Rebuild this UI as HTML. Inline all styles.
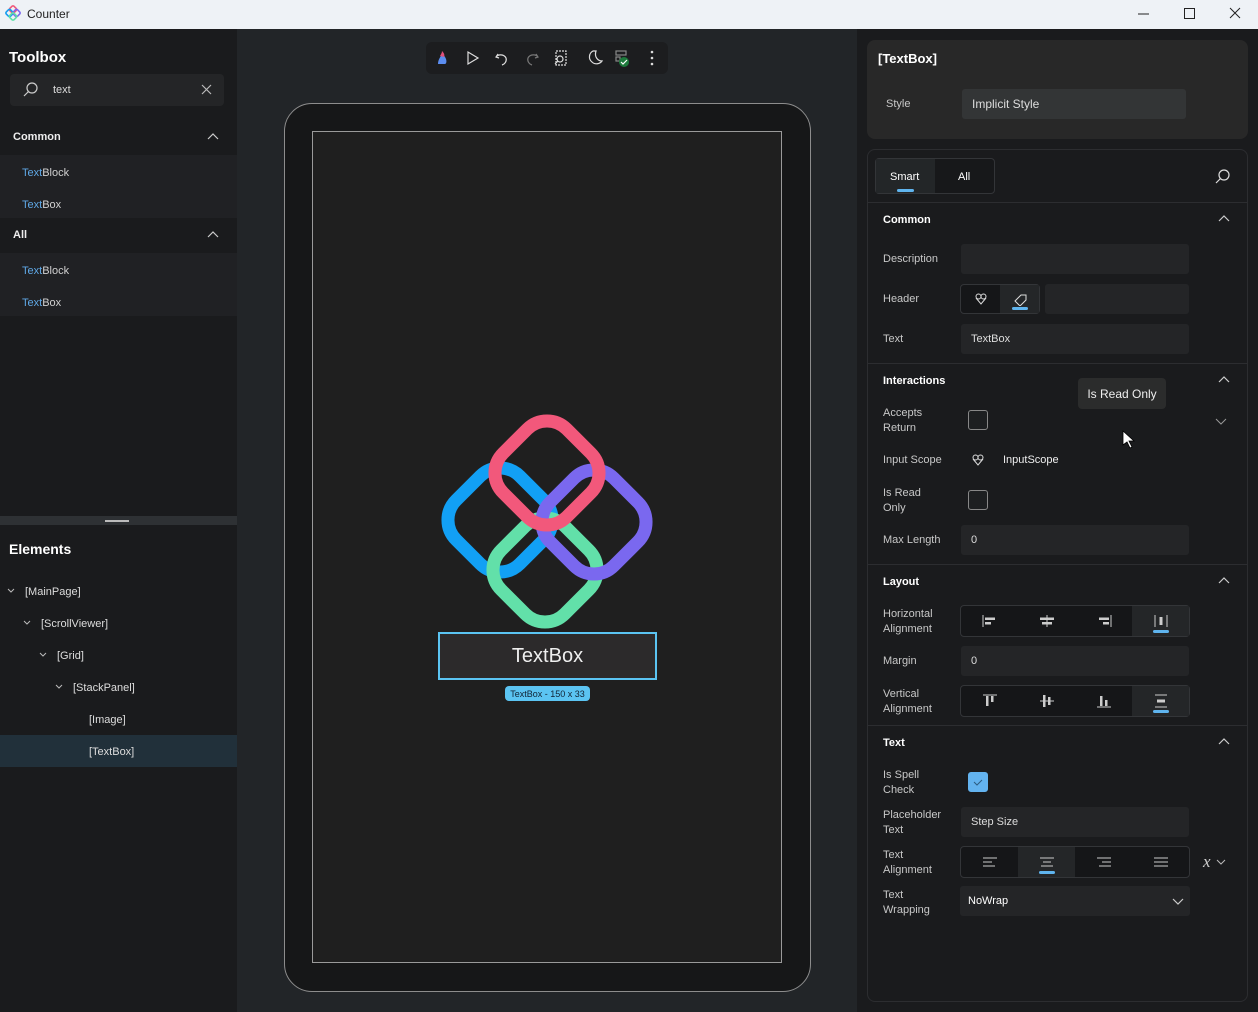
<!DOCTYPE html>
<html><head><meta charset="utf-8">
<style>
*{box-sizing:border-box;margin:0;padding:0}
body{width:1258px;height:1012px;overflow:hidden;background:#1a1b1d;font-family:"Liberation Sans",sans-serif;color:#e6e6e6;position:relative}
.a{position:absolute}
.t{font-size:11px;color:#d0d0d0}
.b{font-weight:bold;color:#fff}
.inp{position:absolute;background:#242527;border-radius:3px;font-size:11px;color:#ddd;padding-left:10px;display:flex;align-items:center}
.chev{position:absolute;width:12px;height:8px}
.seg{position:absolute;border:1px solid #333538;border-radius:4px;background:#151618;display:flex}
.seg div{flex:1;display:flex;align-items:center;justify-content:center;position:relative}
.seg .on{background:#242628}
.seg .on:after{content:"";position:absolute;bottom:3px;left:50%;margin-left:-8px;width:16px;height:3px;border-radius:2px;background:#5fb4ee}
.cb{position:absolute;width:20px;height:20px;border:1px solid #888;border-radius:3px;background:#1d1f21}
.lbl{position:absolute;font-size:11px;color:#c8c8c8;line-height:15px}
.hl{color:#5fa8e6}
</style></head><body>
<div class="a" style="left:0;top:0;width:1258px;height:29px;background:#eef2f6"></div>
<svg class="a" style="left:5px;top:5px" width="16" height="16" viewBox="0 0 16 16"><g fill="none" stroke-width="1.6"><rect x="5" y="1.5" width="6" height="6" rx="1.5" transform="rotate(45 8 4.5)" stroke="#f0587a"/><rect x="1.5" y="5" width="6" height="6" rx="1.5" transform="rotate(45 4.5 8)" stroke="#159cf0"/><rect x="8.5" y="5" width="6" height="6" rx="1.5" transform="rotate(45 11.5 8)" stroke="#7b68ee"/><rect x="5" y="8.5" width="6" height="6" rx="1.5" transform="rotate(45 8 11.5)" stroke="#5ee0a8"/></g></svg>
<div class="a" style="left:27px;top:7px;font-size:12px;color:#222">Counter</div>
<svg class="a" style="left:1130px;top:6px" width="120" height="16"><g stroke="#222" stroke-width="1" fill="none"><path d="M8 8h11"/><rect x="54.5" y="2.5" width="10" height="10"/><path d="M100 2l10 10M110 2l-10 10"/></g></svg>

<div class="a" style="left:0;top:29px;width:237px;height:983px;background:#1a1b1d"></div>
<div class="a b" style="left:9px;top:49px;font-size:15px">Toolbox</div>
<div class="a" style="left:10px;top:74px;width:214px;height:32px;background:#242527;border-radius:4px"></div>
<svg class="a" style="left:22px;top:81px" width="18" height="18"><circle cx="10" cy="7" r="5" stroke="#ccc" stroke-width="1.2" fill="none"/><path d="M6.5 10.5L2 15" stroke="#ccc" stroke-width="1.2"/></svg>
<div class="a t" style="left:53px;top:84px;color:#ddd">text</div>
<svg class="a" style="left:201px;top:84px" width="11" height="11"><path d="M1 1l9 9M10 1l-9 9" stroke="#bbb" stroke-width="1.2"/></svg>

<div class="a b" style="left:13px;top:131px;font-size:11px;color:#eee">Common</div>
<svg class="chev" style="left:207px;top:133px"><path d="M1 6l5-5 5 5" stroke="#ccc" stroke-width="1.2" fill="none"/></svg>
<div class="a" style="left:0;top:155px;width:237px;height:63px;background:#202124"></div>
<div class="a t" style="left:22px;top:167px"><span class="hl">Text</span>Block</div>
<div class="a t" style="left:22px;top:199px"><span class="hl">Text</span>Box</div>
<div class="a b" style="left:13px;top:229px;font-size:11px;color:#eee">All</div>
<svg class="chev" style="left:207px;top:231px"><path d="M1 6l5-5 5 5" stroke="#ccc" stroke-width="1.2" fill="none"/></svg>
<div class="a" style="left:0;top:253px;width:237px;height:63px;background:#202124"></div>
<div class="a t" style="left:22px;top:265px"><span class="hl">Text</span>Block</div>
<div class="a t" style="left:22px;top:297px"><span class="hl">Text</span>Box</div>

<div class="a" style="left:0;top:516px;width:237px;height:9px;background:#2e3134"></div>
<div class="a" style="left:105px;top:520px;width:24px;height:2px;background:#bbb"></div>
<div class="a b" style="left:9px;top:541px;font-size:14px">Elements</div>
<div class="a" style="left:0;top:735px;width:237px;height:32px;background:#21303a"></div>
<svg class="a" style="left:0;top:580px" width="237" height="190"><g stroke="#bbb" stroke-width="1" fill="none"><path d="M8 9l3 3 3-3"/><path d="M24 41l3 3 3-3"/><path d="M40 73l3 3 3-3"/><path d="M56 105l3 3 3-3"/></g></svg>
<div class="a t" style="left:25px;top:586px;color:#ddd">[MainPage]</div>
<div class="a t" style="left:41px;top:618px;color:#ddd">[ScrollViewer]</div>
<div class="a t" style="left:57px;top:650px;color:#ddd">[Grid]</div>
<div class="a t" style="left:73px;top:682px;color:#ddd">[StackPanel]</div>
<div class="a t" style="left:89px;top:714px;color:#ddd">[Image]</div>
<div class="a t" style="left:89px;top:746px;color:#ddd">[TextBox]</div>

<div class="a" style="left:237px;top:29px;width:620px;height:983px;background:#222528"></div>
<div class="a" style="left:426px;top:42px;width:242px;height:32px;background:#1c1d1f;border-radius:6px"></div>
<svg class="a" style="left:426px;top:42px" width="242" height="32">
<path d="M12 22c0-5 3-7 4-11 1 2 3 3 4 6 1 3 0 5-1 5z" fill="#5b8df0"/><path d="M14 14c1-2 2-3 2-5 2 2 3 4 2 6z" fill="#e0507a"/>
<g stroke="#ddd" stroke-width="1.2" fill="none">
<path d="M42 10v12l10-6z"/>
<path d="M72 12l-2 3 3 1M70 15c2-3 8-3 10 1 1 3-1 6-4 7"/>
<path d="M110 12l2 3-3 1M112 15c-2-3-8-3-10 1-1 3 1 6 4 7" stroke="#777"/>
<rect x="130" y="9" width="10" height="14" stroke-dasharray="2 1"/><circle cx="134" cy="17" r="3"/><path d="M132 19l-3 3"/>
<path d="M167 9c-4 2-5 8-1 11 3 3 8 2 10-1-4 0-8-4-6-10z"/>
<rect x="190" y="9" width="10" height="4" stroke="#888"/><rect x="190" y="15" width="4" height="4" stroke="#888"/>
</g>
<circle cx="198" cy="20" r="5" fill="#1d7a3c"/><path d="M195 20l2 2 4-4" stroke="#fff" stroke-width="1.2" fill="none"/>
<g fill="#ddd"><circle cx="226" cy="10" r="1.3"/><circle cx="226" cy="16" r="1.3"/><circle cx="226" cy="22" r="1.3"/></g>
</svg>
<div class="a" style="left:284px;top:103px;width:527px;height:889px;border:1.5px solid #8d8d8d;border-radius:28px;background:#161718"></div>
<div class="a" style="left:312px;top:131px;width:470px;height:832px;border:1.5px solid #9a9a9a;background:#1f1f1f"></div>
<svg class="a" style="left:420px;top:400px" width="260" height="240">
<g fill="none" stroke-width="13">
<rect x="35" y="75" width="90" height="90" rx="28" transform="rotate(45 80 120)" stroke="#12a0f5"/>
<rect x="80" y="125" width="90" height="90" rx="28" transform="rotate(45 125 170)" stroke="#62e0a9"/>
<rect x="129" y="77" width="90" height="90" rx="28" transform="rotate(45 174 122)" stroke="#7a68ef"/>
<rect x="82" y="28" width="90" height="90" rx="28" transform="rotate(45 127 73)" stroke="#f2587b"/>
</g>
</svg>
<div class="a" style="left:438px;top:632px;width:219px;height:48px;border:2px solid #5bc4f2;background:#2c2a2b;display:flex;align-items:center;justify-content:center;font-size:20px;color:#eee">TextBox</div>
<div class="a" style="left:505px;top:686px;width:85px;height:15px;background:#5bc4f2;border-radius:4px;font-size:9px;color:#123;display:flex;align-items:center;justify-content:center">TextBox - 150 x 33</div>

<div class="a" style="left:857px;top:29px;width:401px;height:983px;background:#1a1b1d"></div>
<div class="a" style="left:867px;top:40px;width:381px;height:99px;background:#282828;border-radius:8px"></div>
<div class="a b" style="left:878px;top:51px;font-size:13px">[TextBox]</div>
<div class="lbl" style="left:886px;top:97px">Style</div>
<div class="inp" style="left:962px;top:89px;width:224px;height:30px;background:#333536;font-size:12px">Implicit Style</div>
<div class="a" style="left:867px;top:149px;width:381px;height:853px;border:1px solid #2c2d30;border-radius:8px"></div>
<div class="a" style="left:875px;top:158px;width:120px;height:36px;border:1px solid #333538;border-radius:4px;background:#17181a"></div>
<div class="a" style="left:876px;top:159px;width:59px;height:34px;background:#232628"></div>
<div class="a" style="left:897px;top:189px;width:17px;height:3px;background:#5fb4ee;border-radius:2px"></div>
<div class="a t" style="left:890px;top:171px;color:#fff">Smart</div>
<div class="a t" style="left:958px;top:171px;color:#fff">All</div>
<svg class="a" style="left:1214px;top:168px" width="18" height="18"><circle cx="10" cy="7" r="5" stroke="#ddd" stroke-width="1.2" fill="none"/><path d="M6.5 10.5L2 15" stroke="#ddd" stroke-width="1.2"/></svg>
<div class="a" style="left:868px;top:202px;width:379px;height:1px;background:#2c2d30"></div>

<div class="a b" style="left:883px;top:214px;font-size:11px">Common</div>
<svg class="chev" style="left:1218px;top:215px"><path d="M1 6l5-5 5 5" stroke="#ccc" stroke-width="1.2" fill="none"/></svg>
<div class="lbl" style="left:883px;top:252px">Description</div>
<div class="inp" style="left:961px;top:244px;width:228px;height:30px"></div>
<div class="lbl" style="left:883px;top:292px">Header</div>
<div class="seg" style="left:960px;top:284px;width:80px;height:30px"><div><svg width="14" height="14"><g stroke="#ddd" fill="none"><circle cx="4.5" cy="4.5" r="2.5"/><circle cx="9.5" cy="4.5" r="2.5"/><path d="M2 6l5 6 5-6"/></g></svg></div><div class="on"><svg width="16" height="14"><path d="M3 9l6-6 5 0 0 5-6 6z" stroke="#ddd" fill="none"/></svg></div></div>
<div class="inp" style="left:1045px;top:284px;width:144px;height:30px"></div>
<div class="lbl" style="left:883px;top:332px">Text</div>
<div class="inp" style="left:961px;top:324px;width:228px;height:30px">TextBox</div>
<div class="a" style="left:868px;top:363px;width:379px;height:1px;background:#2c2d30"></div>

<div class="a b" style="left:883px;top:375px;font-size:11px">Interactions</div>
<svg class="chev" style="left:1218px;top:376px"><path d="M1 6l5-5 5 5" stroke="#ccc" stroke-width="1.2" fill="none"/></svg>
<div class="a" style="left:1078px;top:378px;width:88px;height:31px;background:#2b2c2c;border-radius:4px;font-size:12px;color:#eee;display:flex;align-items:center;justify-content:center">Is Read Only</div>
<div class="lbl" style="left:883px;top:406px">Accepts<br>Return</div>
<div class="cb" style="left:968px;top:410px"></div>
<svg class="chev" style="left:1215px;top:418px"><path d="M1 1l5 5 5-5" stroke="#999" stroke-width="1" fill="none"/></svg>
<svg class="a" style="left:1122px;top:430px" width="14" height="20"><path d="M1 1v14l4-3 3 6 2-1-3-6h5z" fill="#fff" stroke="#000" stroke-width="0.8"/></svg>
<div class="lbl" style="left:883px;top:453px">Input Scope</div>
<svg class="a" style="left:971px;top:453px" width="14" height="14"><g stroke="#ddd" fill="none"><circle cx="4.5" cy="4.5" r="2.5"/><circle cx="9.5" cy="4.5" r="2.5"/><path d="M2 6l5 6 5-6"/></g></svg>
<div class="a t" style="left:1003px;top:454px;color:#eee">InputScope</div>
<div class="lbl" style="left:883px;top:486px">Is Read<br>Only</div>
<div class="cb" style="left:968px;top:490px"></div>
<div class="lbl" style="left:883px;top:533px">Max Length</div>
<div class="inp" style="left:961px;top:525px;width:228px;height:30px">0</div>
<div class="a" style="left:868px;top:564px;width:379px;height:1px;background:#2c2d30"></div>

<div class="a b" style="left:883px;top:576px;font-size:11px">Layout</div>
<svg class="chev" style="left:1218px;top:577px"><path d="M1 6l5-5 5 5" stroke="#ccc" stroke-width="1.2" fill="none"/></svg>
<div class="lbl" style="left:883px;top:607px">Horizontal<br>Alignment</div>
<div class="seg" style="left:960px;top:605px;width:230px;height:32px">
<div><svg width="18" height="14"><path d="M2 1v12" stroke="#ccc"/><rect x="4" y="3.5" width="10" height="2.5" fill="#ccc"/><rect x="4" y="8" width="6" height="2.5" fill="#ccc"/></svg></div>
<div><svg width="18" height="14"><path d="M9 1v12" stroke="#ccc"/><rect x="2" y="3.5" width="14" height="2.5" fill="#ccc"/><rect x="4" y="8" width="10" height="2.5" fill="#ccc"/></svg></div>
<div><svg width="18" height="14"><path d="M16 1v12" stroke="#ccc"/><rect x="4" y="3.5" width="10" height="2.5" fill="#ccc"/><rect x="8" y="8" width="6" height="2.5" fill="#ccc"/></svg></div>
<div class="on"><svg width="18" height="14"><path d="M3 1v12M15 1v12" stroke="#ccc"/><rect x="7.5" y="3" width="3" height="8" fill="#ccc"/></svg></div></div>
<div class="lbl" style="left:883px;top:654px">Margin</div>
<div class="inp" style="left:961px;top:646px;width:228px;height:30px">0</div>
<div class="lbl" style="left:883px;top:687px">Vertical<br>Alignment</div>
<div class="seg" style="left:960px;top:685px;width:230px;height:32px">
<div><svg width="18" height="14"><path d="M2 1h14" stroke="#ccc"/><rect x="5" y="2" width="2.5" height="10" fill="#ccc"/><rect x="10" y="2" width="2.5" height="6" fill="#ccc"/></svg></div>
<div><svg width="18" height="14"><path d="M2 7h14" stroke="#ccc"/><rect x="5" y="1" width="2.5" height="12" fill="#ccc"/><rect x="10" y="3" width="2.5" height="8" fill="#ccc"/></svg></div>
<div><svg width="18" height="14"><path d="M2 13h14" stroke="#ccc"/><rect x="5" y="2" width="2.5" height="10" fill="#ccc"/><rect x="10" y="6" width="2.5" height="6" fill="#ccc"/></svg></div>
<div class="on"><svg width="18" height="14"><path d="M3 1h12M3 13h12" stroke="#ccc"/><rect x="5" y="5.5" width="8" height="3" fill="#ccc"/></svg></div></div>
<div class="a" style="left:868px;top:725px;width:379px;height:1px;background:#2c2d30"></div>

<div class="a b" style="left:883px;top:737px;font-size:11px">Text</div>
<svg class="chev" style="left:1218px;top:738px"><path d="M1 6l5-5 5 5" stroke="#ccc" stroke-width="1.2" fill="none"/></svg>
<div class="lbl" style="left:883px;top:768px">Is Spell<br>Check</div>
<div class="cb" style="left:968px;top:772px;background:#63b3ef;border-color:#63b3ef"><svg width="18" height="18"><path d="M5 9l3 3 5-5" stroke="#2d5c80" stroke-width="1" fill="none"/></svg></div>
<div class="lbl" style="left:883px;top:808px">Placeholder<br>Text</div>
<div class="inp" style="left:961px;top:807px;width:228px;height:30px">Step Size</div>
<div class="lbl" style="left:883px;top:848px">Text<br>Alignment</div>
<div class="seg" style="left:960px;top:846px;width:230px;height:32px">
<div><svg width="16" height="12"><path d="M1 2h14M1 6h9M1 10h12" stroke="#ccc"/></svg></div>
<div class="on"><svg width="16" height="12"><path d="M1 2h14M4 6h8M2 10h12" stroke="#ccc"/></svg></div>
<div><svg width="16" height="12"><path d="M1 2h14M6 6h9M3 10h12" stroke="#ccc"/></svg></div>
<div><svg width="16" height="12"><path d="M1 2h14M1 6h14M1 10h14" stroke="#ccc"/></svg></div></div>
<div class="a" style="left:1203px;top:852px;font-family:'Liberation Serif',serif;font-style:italic;font-size:17px;color:#ccc">x</div>
<svg class="a" style="left:1216px;top:859px" width="10" height="6"><path d="M1 1l4 4 4-4" stroke="#bbb" fill="none"/></svg>
<div class="lbl" style="left:883px;top:888px">Text<br>Wrapping</div>
<div class="inp" style="left:960px;top:886px;width:230px;height:30px;color:#fff;padding-left:8px">NoWrap</div>
<svg class="a" style="left:1172px;top:898px" width="12" height="8"><path d="M1 1l5 5 5-5" stroke="#ccc" stroke-width="1.2" fill="none"/></svg>
</body></html>
